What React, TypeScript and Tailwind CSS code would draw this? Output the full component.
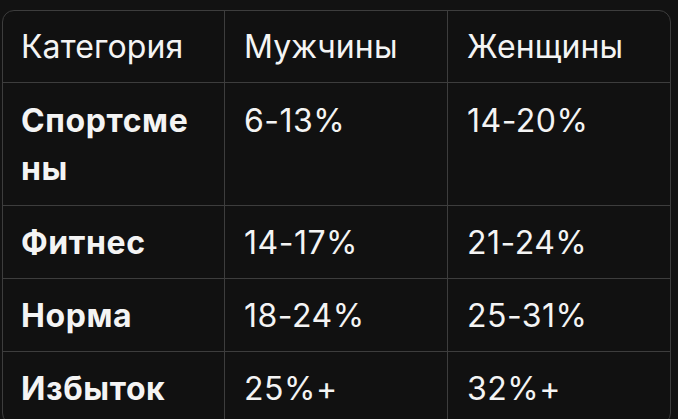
import React from "react";

const rows = [
  { cat: "Спортсмены", m: "6-13%", w: "14-20%", pad: "pt-[14px] pb-[12px]" },
  { cat: "Фитнес", m: "14-17%", w: "21-24%", pad: "pt-[13px] pb-[11px]" },
  { cat: "Норма", m: "18-24%", w: "25-31%", pad: "pt-[13px] pb-[11px]" },
  { cat: "Избыток", m: "25%+", w: "32%+", pad: "pt-[13px] pb-[11px]" },
];

export default function App() {
  return (
    <div
      className="min-h-[419px] w-[678px] bg-[#121212] pt-[10px] pl-[2px] text-[#f4f4f4]"
      style={{ fontFamily: "Inter, 'Noto Sans', sans-serif" }}
    >
      <div className="w-[669px] overflow-hidden rounded-[12px] border border-[#3d3d3d] bg-[#111111]">
        <div className="grid grid-cols-[222px_223px_1fr] text-[32px] leading-[48px] tracking-[0.1px]">
          <div className="border-b border-r border-[#3d3d3d] pl-[18px] pt-[12px] pb-[11px]">Категория</div>
          <div className="border-b border-r border-[#3d3d3d] pl-[19px] pt-[12px] pb-[11px]">Мужчины</div>
          <div className="border-b border-[#3d3d3d] pl-[19px] pt-[12px] pb-[11px]">Женщины</div>
          {rows.map((r, i) => (
            <React.Fragment key={r.cat}>
              <div
                className={`border-r border-[#3d3d3d] pl-[18px] pr-[20px] font-bold tracking-[0.6px] break-all ${r.pad} ${i < rows.length - 1 ? "border-b" : ""}`}
              >
                {r.cat}
              </div>
              <div className={`border-r border-[#3d3d3d] pl-[19px] tracking-[0.5px] ${r.pad} ${i < rows.length - 1 ? "border-b" : ""}`}>
                {r.m}
              </div>
              <div className={`border-[#3d3d3d] pl-[19px] tracking-[0.5px] ${r.pad} ${i < rows.length - 1 ? "border-b" : ""}`}>
                {r.w}
              </div>
            </React.Fragment>
          ))}
        </div>
      </div>
    </div>
  );
}
